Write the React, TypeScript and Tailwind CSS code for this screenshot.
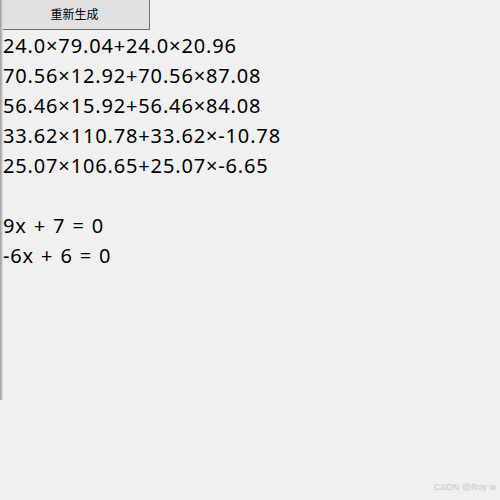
export default function App() {
  const lines = [
    "24.0×79.04+24.0×20.96",
    "70.56×12.92+70.56×87.08",
    "56.46×15.92+56.46×84.08",
    "33.62×110.78+33.62×-10.78",
    "25.07×106.65+25.07×-6.65",
  ];
  const eqs = ["9x + 7 = 0", "-6x + 6 = 0"];

  return (
    <div className="relative w-[500px] h-[500px] bg-[#f0f0f0] overflow-hidden font-['Noto_Sans','Noto_Sans_CJK_SC',sans-serif] text-black">
      {/* window edge shadow */}
      <div className="absolute left-0 top-0 w-[3px] h-[400px] bg-gradient-to-r from-[#9a9a9a] to-[#e4e4e4]" />

      <div className="flex flex-col">
        <button className="w-[150px] h-[30px] bg-[#e1e1e1] border-r border-b border-r-[#707070] border-b-[#707070] text-[12px] leading-none">
          重新生成
        </button>

        <div className="pl-[3px] pt-[1px] text-[20px] leading-[30px] tracking-[0.85px]">
          {lines.map((l) => (
            <div key={l}>{l}</div>
          ))}
          <div className="h-[30px]" />
          {eqs.map((e) => (
            <div key={e} className="whitespace-pre [word-spacing:1px]">
              {e}
            </div>
          ))}
        </div>
      </div>

      <div className="absolute right-[4px] bottom-[6px] text-[9px] text-[#c8c8c8] font-['Liberation_Sans',sans-serif]">
        CSDN @Roy w
      </div>
    </div>
  );
}
